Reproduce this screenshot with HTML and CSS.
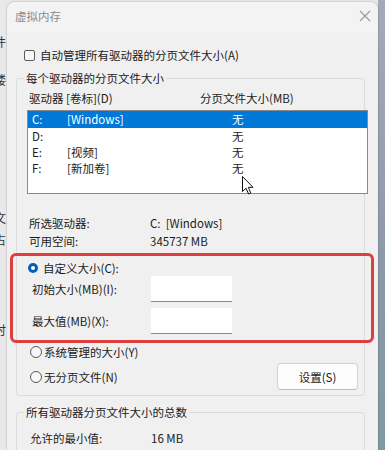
FILE: index.html
```html
<!DOCTYPE html>
<html lang="zh-CN">
<head>
    <meta charset="UTF-8">
    <meta name="viewport" content="width=device-width, initial-scale=1.0">
    <title>虚拟内存</title>
    <link rel="stylesheet" href="styles.css">
</head>
<body>
    <div class="screen">
        <!-- janela atrás do diálogo, quase toda escondida -->
        <div class="behind">
            <span class="peek p1">件</span>
            <span class="peek p2">楼</span>
            <span class="peek p3">文</span>
            <span class="peek p4">占</span>
            <span class="peek p5">时</span>
        </div>

        <div class="dialog">
            <div class="titlebar">
                <span class="title">虚拟内存</span>
                <svg class="close" width="12" height="12" viewBox="0 0 12 12">
                    <path d="M1 1 L11 11 M11 1 L1 11" stroke="#9a9a9a" stroke-width="1.1" fill="none"/>
                </svg>
            </div>

            <div class="content">
                <label class="check"><span class="box"></span>自动管理所有驱动器的分页文件大小(A)</label>

                <fieldset class="group first">
                    <legend>每个驱动器的分页文件大小</legend>
                    <div class="cols">
                        <span class="col-drive">驱动器 [卷标](D)</span>
                        <span>分页文件大小(MB)</span>
                    </div>

                    <ul class="drives">
                        <li class="selected"><span class="letter">C:</span><span class="label">[Windows]</span><span class="size">无</span></li>
                        <li><span class="letter">D:</span><span class="label"></span><span class="size">无</span></li>
                        <li><span class="letter">E:</span><span class="label">[视频]</span><span class="size">无</span></li>
                        <li><span class="letter">F:</span><span class="label">[新加卷]</span><span class="size">无</span></li>
                    </ul>

                    <div class="info">
                        <div class="info-row"><span class="info-key">所选驱动器:</span><span>C:&nbsp; [Windows]</span></div>
                        <div class="info-row"><span class="info-key">可用空间:</span><span>345737 MB</span></div>
                    </div>

                    <div class="highlight">
                        <label class="radio-row"><span class="radio on"></span>自定义大小(C):</label>
                        <div class="field-row">
                            <span class="field-label">初始大小(MB)(I):</span>
                            <span class="textbox"></span>
                        </div>
                        <div class="field-row second">
                            <span class="field-label">最大值(MB)(X):</span>
                            <span class="textbox"></span>
                        </div>
                    </div>

                    <label class="radio-row plain"><span class="radio"></span>系统管理的大小(Y)</label>
                    <div class="action-row">
                        <label class="radio-row plain"><span class="radio"></span>无分页文件(N)</label>
                        <button class="btn">设置(S)</button>
                    </div>
                </fieldset>

                <fieldset class="group total">
                    <legend>所有驱动器分页文件大小的总数</legend>
                    <div class="info-row"><span class="info-key">允许的最小值:</span><span>16 MB</span></div>
                </fieldset>
            </div>
        </div>

        <div class="desktop"></div>

        <!-- cursor do mouse por cima da lista -->
        <svg class="cursor" width="12" height="19" viewBox="0 0 12 19">
            <path d="M0.5 0.5 L0.5 15.5 L4 12.2 L6.6 18 L8.8 17 L6.3 11.3 L11 11.3 Z" fill="#fff" stroke="#111" stroke-width="1"/>
        </svg>
    </div>
</body>
</html>
```

FILE: styles.css
```css
* {
    margin: 0;
    padding: 0;
    box-sizing: border-box;
}

body {
    font-family: "Noto Sans CJK SC", "Noto Sans", sans-serif;
    font-size: 11.5px;
    color: #1b1b1b;
    background-color: #e8e8ea;
}

.screen {
    position: relative;
    display: flex;
    width: 385px;
    height: 450px;
    overflow: hidden;
}

/* janela de trás */
.behind {
    width: 7px;
    flex-shrink: 0;
    background-color: #e9e9eb;
    display: flex;
    flex-direction: column;
    overflow: hidden;
    color: #333;
    font-size: 12px;
    line-height: 16px;
}

.peek {
    display: block;
    margin-left: -6px;
    white-space: nowrap;
}

.p1 { margin-top: 34px; }
.p2 { margin-top: 22px; }
.p3 { margin-top: 122px; }
.p4 { margin-top: 6px; }
.p5 { margin-top: 74px; }

/* diálogo */
.dialog {
    width: 371px;
    flex-shrink: 0;
    margin-top: 2px;
    background-color: #f0f0f0;
    border-radius: 8px 8px 0 0;
    box-shadow: 0 0 2px rgba(0, 0, 0, 0.35);
    position: relative;
    z-index: 1;
}

.titlebar {
    height: 30px;
    display: flex;
    align-items: center;
    justify-content: space-between;
    padding: 0 8px 2px 8px;
    background-color: #f3f3f3;
    border-radius: 8px 8px 0 0;
}

.title {
    color: #8c8c8c;
    font-size: 11.5px;
}

.close {
    margin-right: -1px;
}

.content {
    padding: 0 13px 0 9px;
}

.check {
    display: flex;
    align-items: center;
    height: 16px;
    line-height: 16px;
    margin-top: 15px;
    padding-left: 8px;
}

.box {
    width: 11px;
    height: 11px;
    border: 1px solid #5c5c5c;
    border-radius: 2px;
    background-color: #f7f7f7;
    margin-right: 5px;
}

/* caixas de grupo */
.group {
    border: 1px solid #dcdcdc;
    border-radius: 3px;
    padding: 0;
    margin-top: 7px;
}

.group legend {
    margin-left: 7px;
    padding: 0 2px;
    line-height: 16px;
}

.cols {
    display: flex;
    height: 16px;
    line-height: 16px;
    margin-top: 4px;
    padding-left: 12px;
}

.col-drive {
    width: 171px;
}

.drives {
    list-style: none;
    height: 84px;
    margin: 4px -4px 0 10px;
    border: 1px solid #8a8a8a;
    background-color: #fff;
    padding-top: 0;
}

.drives li {
    display: flex;
    height: 16px;
    line-height: 16px;
    padding-left: 4px;
}

.drives li.selected {
    background-color: #0078d7;
    color: #fff;
    height: 17px;
    line-height: 17px;
}

.letter {
    width: 35px;
}

.label {
    width: 165px;
}

.info {
    margin-top: 20px;
}

.info-row {
    display: flex;
    height: 18px;
    line-height: 18px;
    padding-left: 12px;
}

.info-key {
    width: 121px;
}

/* caixa vermelha de destaque */
.highlight {
    margin: 3px -10px 0 -7px;
    border: 3px solid #dc3f3d;
    border-radius: 6px;
    padding: 4px 0 6px 0;
}

.radio-row {
    display: flex;
    align-items: center;
    height: 16px;
    line-height: 16px;
    padding-left: 15px;
}

.radio {
    width: 11px;
    height: 11px;
    border-radius: 50%;
    border: 1px solid #5a5a5a;
    background-color: #f7f7f7;
    margin-right: 5px;
}

.radio.on {
    border: none;
    background-color: #fff;
    box-shadow: inset 0 0 0 3px #005fb8;
    width: 10px;
    height: 10px;
}

.field-row {
    display: flex;
    align-items: center;
    height: 26px;
    padding-left: 19px;
}

.field-row.second {
    margin-top: 6px;
}

.field-label {
    width: 119px;
}

.textbox {
    width: 81px;
    height: 26px;
    background-color: #fff;
    border-bottom: 1px solid #8a8a8a;
}

.radio-row.plain {
    padding-left: 13px;
    margin-top: 1px;
}

.radio-row.plain .radio {
    width: 12px;
    height: 12px;
    margin-right: 2px;
}

.action-row {
    display: flex;
    align-items: center;
    justify-content: space-between;
    height: 27px;
    margin-top: 3px;
    margin-bottom: 5px;
    padding-right: 6px;
}

.action-row .radio-row.plain {
    margin-top: 0;
}

.btn {
    width: 81px;
    height: 27px;
    font-family: inherit;
    font-size: 11.5px;
    color: #1b1b1b;
    background-color: #fdfdfd;
    border: 1px solid #d2d2d2;
    border-bottom-color: #bdbdbd;
    border-radius: 4px;
}

.group.total {
    margin-top: 8px;
    height: 60px;
}

.group.total .info-row {
    margin-top: 9px;
    padding-left: 13px;
}

/* fundo da área de trabalho */
.desktop {
    flex: 1;
    background: linear-gradient(180deg, #a3abb9 0%, #8d98a9 60%, #7f9ba2 100%);
}

.cursor {
    position: absolute;
    left: 242px;
    top: 176px;
    z-index: 2;
}
```
